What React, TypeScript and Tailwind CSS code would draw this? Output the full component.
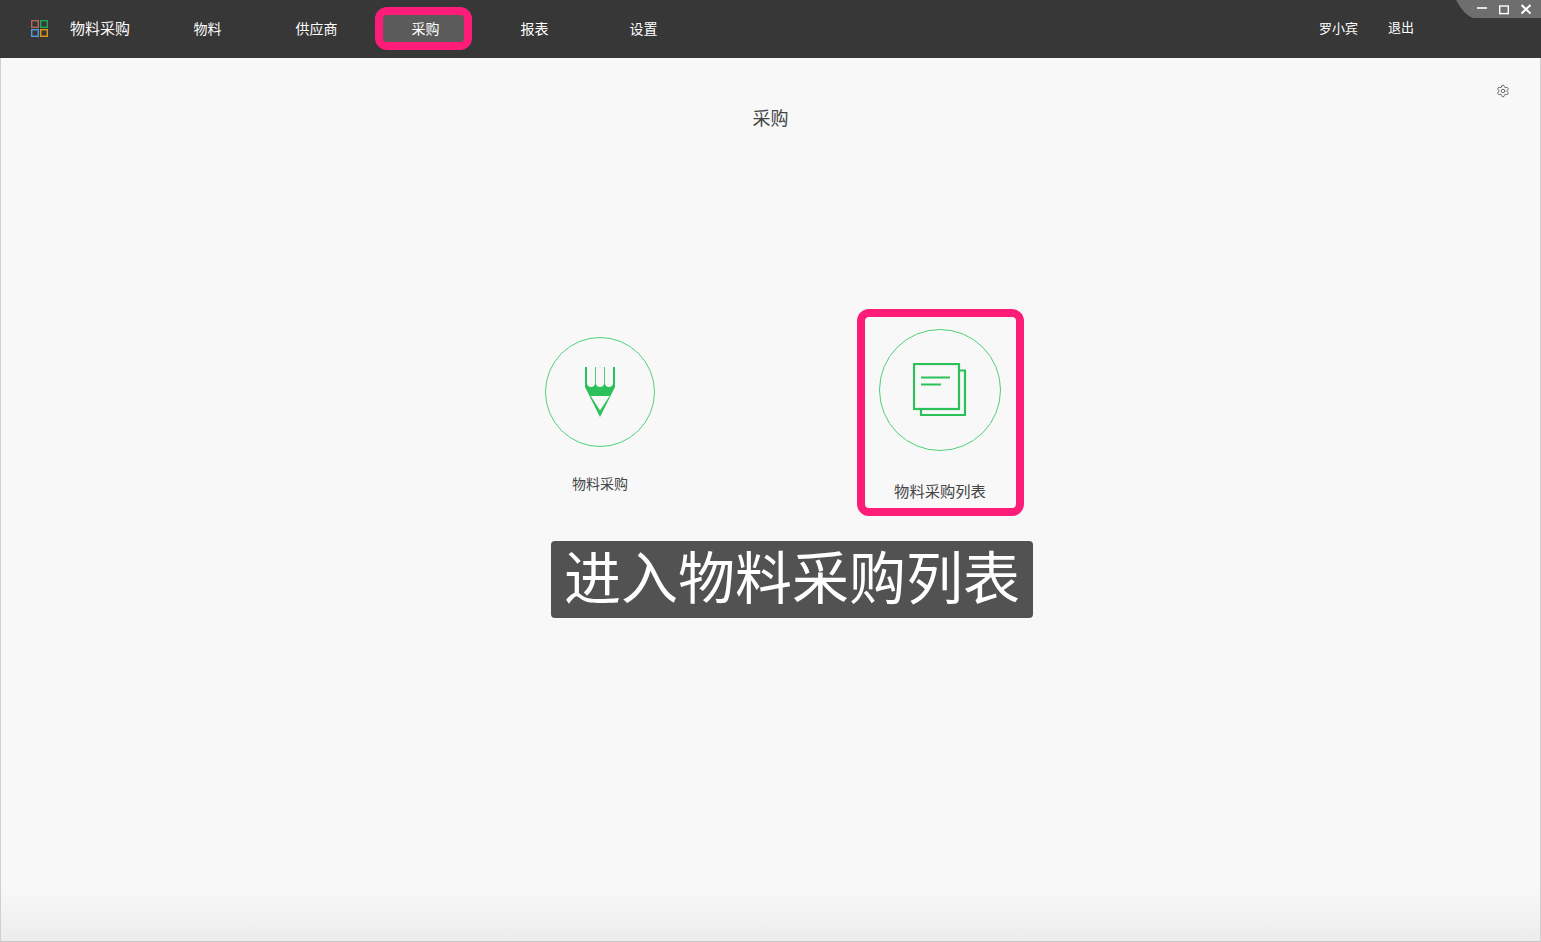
import { Settings } from "lucide-react";

const font = { fontFamily: '"Noto Sans CJK SC", "Noto Sans", sans-serif' };

function Logo() {
  return (
    <svg width="17" height="17" viewBox="0 0 17 17" fill="none" strokeWidth="1.4">
      <rect x="0.7" y="0.7" width="6.6" height="6.6" stroke="#b5665c" />
      <rect x="9.7" y="0.7" width="6.6" height="6.6" stroke="#1fa85a" />
      <rect x="0.7" y="9.7" width="6.6" height="6.6" stroke="#4f9be0" />
      <rect x="9.7" y="9.7" width="6.6" height="6.6" stroke="#e09515" />
    </svg>
  );
}

function WindowControls() {
  return (
    <svg className="absolute top-0 right-0" width="85" height="19" viewBox="0 0 85 19">
      <path d="M0 0 H85 V18 H17 Q8 15 0 0 Z" fill="#6e6e6e" />
      <path d="M21 8 H31" stroke="#fff" strokeWidth="1.6" />
      <rect x="43.7" y="6" width="8.6" height="7.6" fill="none" stroke="#fff" strokeWidth="1.4" />
      <path d="M65.5 5 L74.5 13.5 M74.5 5 L65.5 13.5" stroke="#fff" strokeWidth="2" />
    </svg>
  );
}

function Pencil() {
  return (
    <svg width="30" height="50" viewBox="0 0 30 50" fill="#2cc05a">
      <path
        fillRule="evenodd"
        d="M0 0 H2 V17 Q3 20 6 20 Q9 20 10.1 17 V0 H10.9 V17 Q12 20 15 20 Q18 20 19.1 17 V0 H19.9 V17 Q21 20 24 20 Q27 20 28 17 V0 H30 V20 L15 50 L0 20 Z M5.8 29 L15 43.5 L24.5 29 Z"
      />
    </svg>
  );
}

function Docs() {
  return (
    <svg width="54" height="54" viewBox="0 0 54 54" fill="none" stroke="#2cc05a" strokeWidth="2.2">
      <rect x="1" y="1" width="45" height="45" />
      <path d="M47 7.5 H52 V52 H8 V46" />
      <path d="M8 14.5 H37 M8 21.5 H28" />
    </svg>
  );
}

const navItems = ["物料", "供应商", "采购", "报表", "设置"];

export default function App() {
  return (
    <div className="flex h-[942px] w-[1541px] flex-col overflow-hidden bg-[#f8f8f8]" style={font}>
      <header className="relative flex h-[58px] shrink-0 items-center bg-[#373737] pb-[2px] pl-[31px] pr-[127px] text-white">
        <Logo />
        <span className="ml-[22px] w-[60px] text-[15px] leading-5">物料采购</span>
        <nav className="ml-[23px] flex">
          {navItems.map((item) => (
            <div key={item} className="relative w-[109px] text-center text-[14px] leading-5">
              {item === "采购" && (
                <span className="absolute left-[4px] top-[-11px] h-[43px] w-[97px] rounded-[12px] border-[8px] border-[#fd1d79] bg-[#5b5b5b]" />
              )}
              <span className="relative">{item}</span>
            </div>
          ))}
        </nav>
        <div className="ml-auto flex items-center gap-[30px] text-[13px] leading-5">
          <span>罗小宾</span>
          <span className="-mt-0.5">退出</span>
        </div>
        <WindowControls />
      </header>

      <main className="relative flex min-h-0 flex-1 flex-col border-x border-b border-x-[#d0d0d0] border-b-[#c8c8c8] text-[#444]">
        <h1 className="pt-[46px] text-center text-[18px] font-normal leading-[26px]">采购</h1>
        <Settings className="absolute right-[30px] top-[26px] text-[#444]" size={14} strokeWidth={1.3} />

        <div className="ml-[429px] mt-[199px] grid w-[680px] grid-cols-2 justify-items-center">
          <div className="mt-2 flex flex-col items-center">
            <div className="flex h-[110px] w-[110px] items-center justify-center rounded-full border border-[#4fd07a]">
              <Pencil />
            </div>
            <div className="mt-[26px] text-[14px] leading-5">物料采购</div>
          </div>
          <div className="relative flex flex-col items-center">
            <div className="flex h-[122px] w-[122px] items-center justify-center rounded-full border border-[#4fd07a]">
              <Docs />
            </div>
            <div className="mt-[29px] text-[15.3px] leading-5">物料采购列表</div>
            <div className="absolute bottom-[-16px] left-[-22px] right-[-23px] top-[-20px] rounded-[12px] border-[8px] border-[#fd1d79]" />
          </div>
        </div>

        <div className="absolute left-[550px] top-[483px] flex h-[77px] w-[482px] items-center justify-center whitespace-nowrap rounded-[4px] bg-[#525252] pb-[10px] text-[57px] font-normal leading-none text-white">
          进入物料采购列表
        </div>

        <div className="mt-auto h-[50px] bg-gradient-to-b from-[#f8f8f8] to-[#ececec]" />
      </main>
    </div>
  );
}
